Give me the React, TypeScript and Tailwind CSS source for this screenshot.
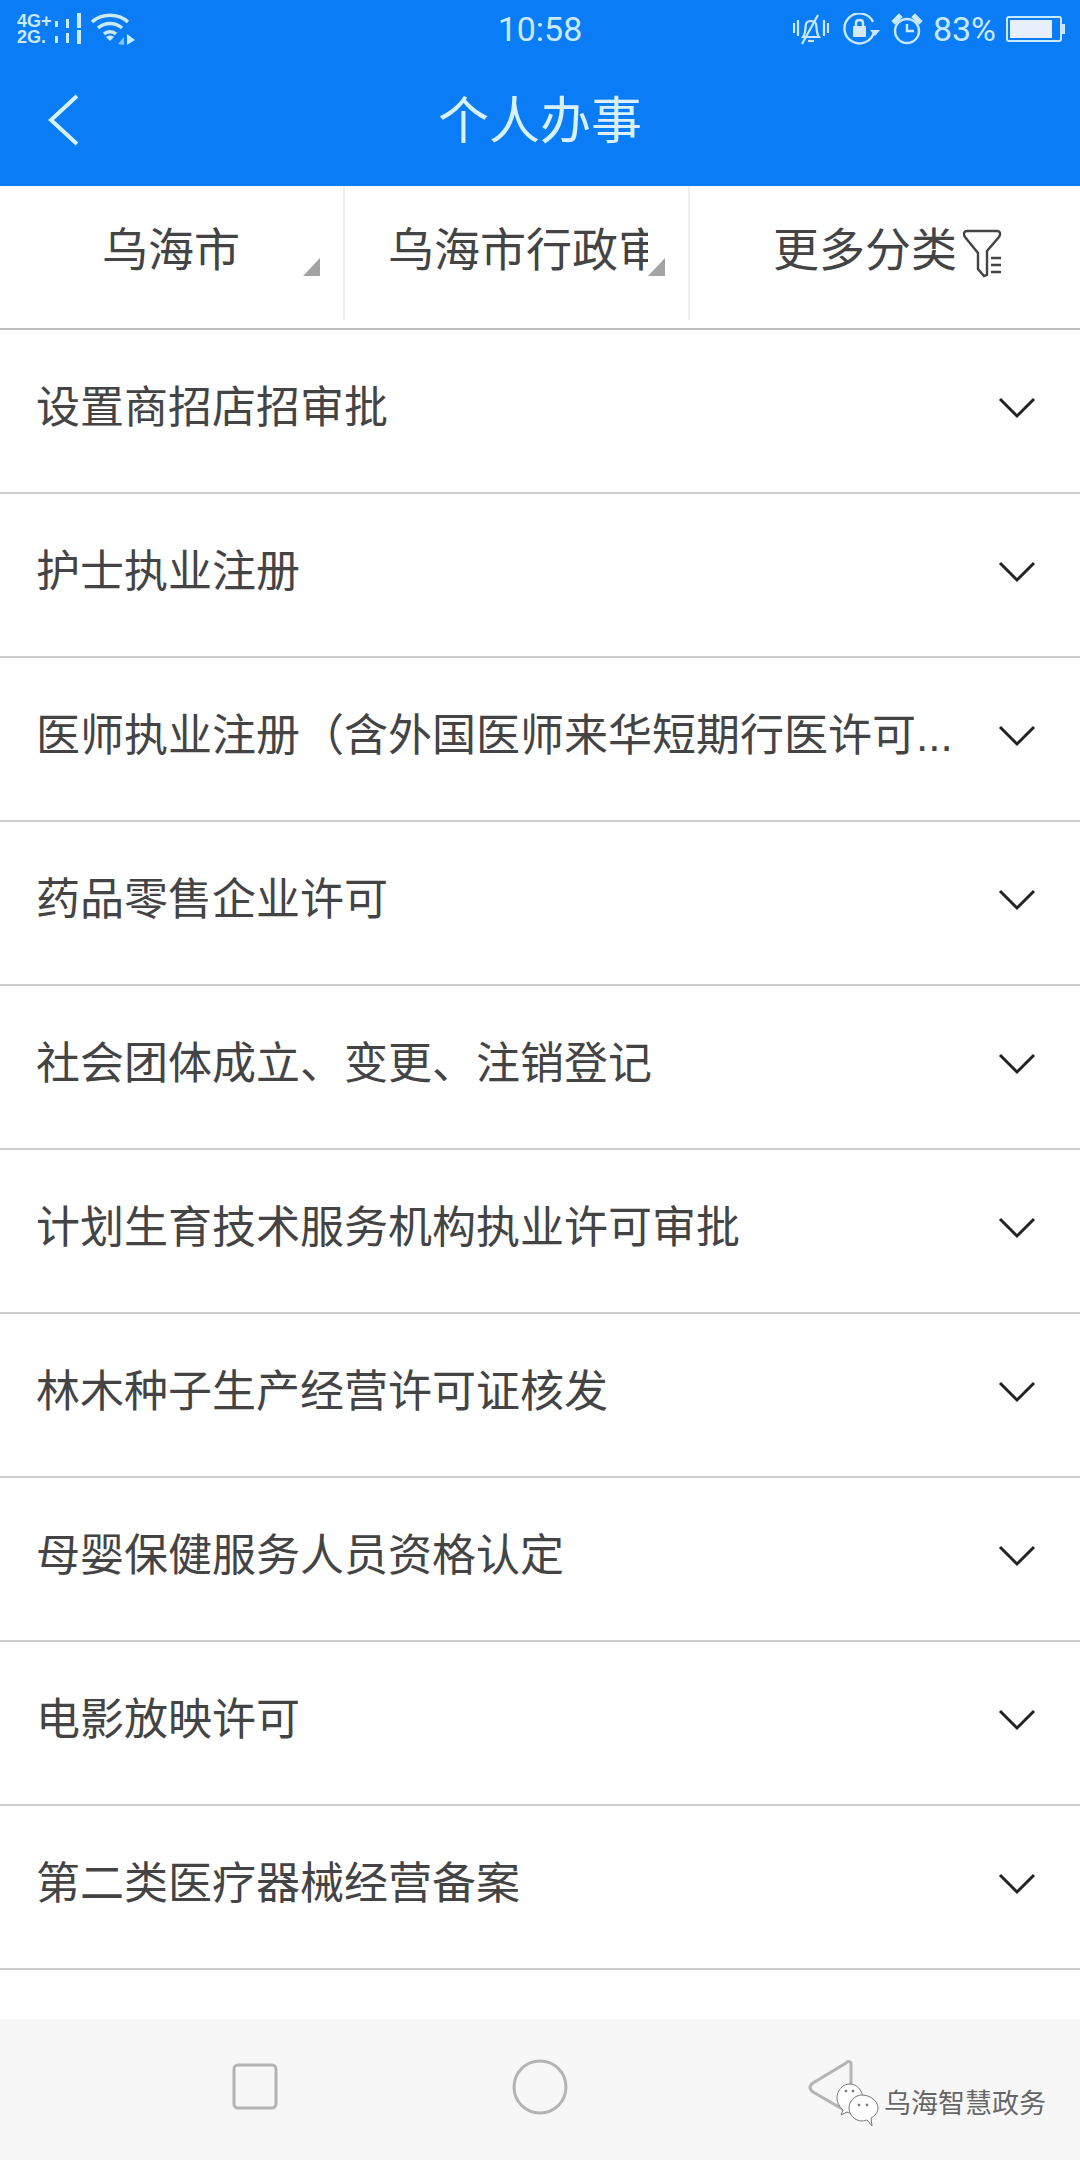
const services = [
  '设置商招店招审批',
  '护士执业注册',
  '医师执业注册（含外国医师来华短期行医许可...',
  '药品零售企业许可',
  '社会团体成立、变更、注销登记',
  '计划生育技术服务机构执业许可审批',
  '林木种子生产经营许可证核发',
  '母婴保健服务人员资格认定',
  '电影放映许可',
  '第二类医疗器械经营备案',
];

function Corner() {
  return (
    <svg width="17" height="18" viewBox="0 0 17 18" className="shrink-0">
      <path d="M17 0V18H0Z" fill="#a3a3a3" />
    </svg>
  );
}

function StatusLeft() {
  return (
    <div className="flex items-center gap-[9px] pl-[17px]">
      <div className="flex flex-col text-[18px] leading-[16px] font-bold text-[#c9e9ff] font-['Liberation_Sans',sans-serif]">
        <span>4G+</span>
        <span>2G.</span>
      </div>
      <svg width="28" height="32" viewBox="0 0 28 32" fill="#c9e9ff" className="-ml-[8px]">
        <rect x="2" y="8" width="3" height="6" />
        <rect x="13" y="6" width="3" height="9" />
        <rect x="24" y="0" width="4" height="15" />
        <rect x="2" y="23" width="3" height="7" />
        <rect x="13" y="20" width="3" height="10" />
        <rect x="24" y="17" width="4" height="14" />
      </svg>
      <svg width="46" height="32" viewBox="0 0 46 32" fill="none" stroke="#c9e9ff" strokeWidth="3.5">
        <path d="M2 9C12 0 28 0 38 9" />
        <path d="M8 15C15 9 25 9 32 15" />
        <path d="M14 21C17 18 23 18 26 21" />
        <path d="M20 28L16 24C18 22 22 22 24 24Z" fill="#c9e9ff" stroke="none" />
        <path d="M37 21V32L45 27Z" fill="#c9e9ff" stroke="none" />
        <path d="M34 32V24L28 31Z" fill="#8cc4f5" stroke="none" />
      </svg>
    </div>
  );
}

function StatusRight() {
  return (
    <div className="flex items-center justify-end gap-[10px] pr-[14px]">
      <svg width="36" height="32" viewBox="0 0 36 32" fill="none" stroke="#c9e9ff" strokeWidth="2.2">
        <path d="M10 24C13 20 12 15 13 11C14 7 22 7 23 11C24 15 23 20 26 24Z" />
        <path d="M15 28H21" />
        <path d="M25 2L9 31" />
        <path d="M1 10V20M5 7V23M31 7V23M35 10V20" />
      </svg>
      <svg width="38" height="32" viewBox="0 0 38 32" fill="none" stroke="#c9e9ff" strokeWidth="2.4" className="ml-[4px]">
        <path d="M31 19A15 15 0 1 1 30 9" />
        <path d="M27 17H37L32 23Z" fill="#c9e9ff" stroke="none" />
        <rect x="10" y="13" width="13" height="11" rx="1" fill="#d8e8fb" stroke="none" />
        <path d="M13 13V10C13 6 20 6 20 10V13" />
      </svg>
      <svg width="32" height="32" viewBox="0 0 32 32" fill="none" stroke="#c9e9ff" strokeWidth="2.4">
        <circle cx="16" cy="18" r="12" />
        <path d="M16 11V18H23" />
        <path d="M2 8L8 2L10 4L4 10Z" fill="#c9e9ff" />
        <path d="M30 8L24 2L22 4L28 10Z" fill="#c9e9ff" />
      </svg>
      <span className="text-[34px] leading-none text-[#c9e9ff] font-['Roboto',sans-serif]">83%</span>
      <svg width="60" height="28" viewBox="0 0 60 28">
        <rect x="1" y="2" width="54" height="24" rx="2" fill="none" stroke="#c9e9ff" strokeWidth="2" />
        <rect x="4" y="5" width="42" height="18" fill="#e6effb" />
        <rect x="56" y="9" width="3" height="10" fill="#c9e9ff" />
      </svg>
    </div>
  );
}

function FilterTab({ label, wide }: { label: string; wide?: boolean }) {
  return (
    <div className="flex h-[134px] w-[345px] items-center border-r-2 border-[#eeeeee] pb-[4px]">
      <span className={wide ? 'ml-[43px] w-[260px] overflow-hidden whitespace-nowrap leading-[1.3]' : 'ml-[102px] w-[201px] whitespace-nowrap leading-[1.3]'}>
        {label}
      </span>
      <span className="mt-[32px]">
        <Corner />
      </span>
    </div>
  );
}

function ServiceRow({ name }: { name: string }) {
  return (
    <div className="flex h-[164px] items-center justify-between border-b-2 border-[#cfcfcf] pb-[7px] pl-[36px] pr-[44px]">
      <span className="whitespace-nowrap text-[44px] leading-[1.3] text-[#444444]">{name}</span>
      <svg width="38" height="24" viewBox="0 0 38 24" fill="none" stroke="#222222" strokeWidth="3" className="mt-[1px] shrink-0">
        <path d="M2 3L19 20L36 3" />
      </svg>
    </div>
  );
}

function Watermark() {
  return (
    <div className="absolute right-[34px] bottom-[32px] flex items-center gap-[4px]">
      <svg width="46" height="46" viewBox="0 0 46 46" fill="#ffffff" stroke="#777777" strokeWidth="1">
        <path d="M16 2C8 2 3 9 3 16C3 21 6 25 9 28L7 33L13 30C15 31 16 31 18 31C25 31 30 24 29 16C28 8 23 2 16 2Z" />
        <path d="M28 13C21 13 15 19 15 26C15 33 21 39 28 39C30 39 32 38 33 38L38 44L37 36C41 34 44 30 44 26C44 19 36 13 28 13Z" />
        <circle cx="12" cy="9" r="1" fill="#777777" />
        <circle cx="19" cy="9" r="1" fill="#777777" />
        <circle cx="25" cy="23" r="1" fill="#777777" />
        <circle cx="33" cy="23" r="1" fill="#777777" />
      </svg>
      <span className="text-[27px] leading-[1.3] text-[#666666] [text-shadow:0_0_2px_#ffffff]">乌海智慧政务</span>
    </div>
  );
}

export default function App() {
  return (
    <div className="flex h-[2160px] w-[1080px] flex-col overflow-hidden bg-white font-['Liberation_Sans','Noto_Sans_CJK_SC',sans-serif]">
      <header className="h-[186px] shrink-0 bg-[#0a7cf6]">
        <div className="grid h-[58px] grid-cols-3 items-center">
          <StatusLeft />
          <span className="text-center text-[34px] leading-none text-[#c9e9ff] font-['Roboto',sans-serif]">10:58</span>
          <StatusRight />
        </div>
        <div className="relative flex h-[128px] items-center justify-center">
          <svg width="36" height="54" viewBox="0 0 36 54" fill="none" stroke="#d8f1ff" strokeWidth="4" className="absolute left-[46px] top-[35px]">
            <path d="M31 3L5 27L31 51" />
          </svg>
          <span className="text-[51px] leading-[1.3] text-[#d8f1ff]">个人办事</span>
        </div>
      </header>

      <div className="flex h-[144px] shrink-0 items-start border-b-2 border-[#bdbdbd] text-[46px] leading-[1.3] text-[#444444]">
        <FilterTab label="乌海市" />
        <FilterTab label="乌海市行政审批局" wide />
        <div className="flex h-[134px] flex-1 items-center justify-center gap-[6px] pb-[4px] pl-[6px]">
          <span className="whitespace-nowrap">更多分类</span>
          <svg width="40" height="50" viewBox="0 0 40 50" fill="none" stroke="#444444" strokeWidth="2.4" className="mt-[6px]">
            <path d="M4 2H34C37 2 38 5 36 8L24 22V46L21 47L15 40V24L2 8C0 5 1 2 4 2Z" />
            <path d="M28 29H38M28 36H38M28 43H38" />
          </svg>
        </div>
      </div>

      <div className="flex-1">
        {services.map((name) => (
          <ServiceRow key={name} name={name} />
        ))}
      </div>

      <footer className="relative flex h-[141px] shrink-0 items-center bg-[#f7f7f7] pb-[4px]">
        <svg width="1080" height="60" viewBox="0 0 1080 60" fill="none" stroke="#b4b4b4" strokeWidth="3">
          <rect x="234" y="7" width="42" height="43" rx="4" />
          <circle cx="540" cy="29" r="26" />
          <path d="M851 6C851 3 848 3 846 5L813 25C809 28 809 31 813 34L846 53C849 54 851 54 851 51Z" />
        </svg>
        <Watermark />
      </footer>
    </div>
  );
}
